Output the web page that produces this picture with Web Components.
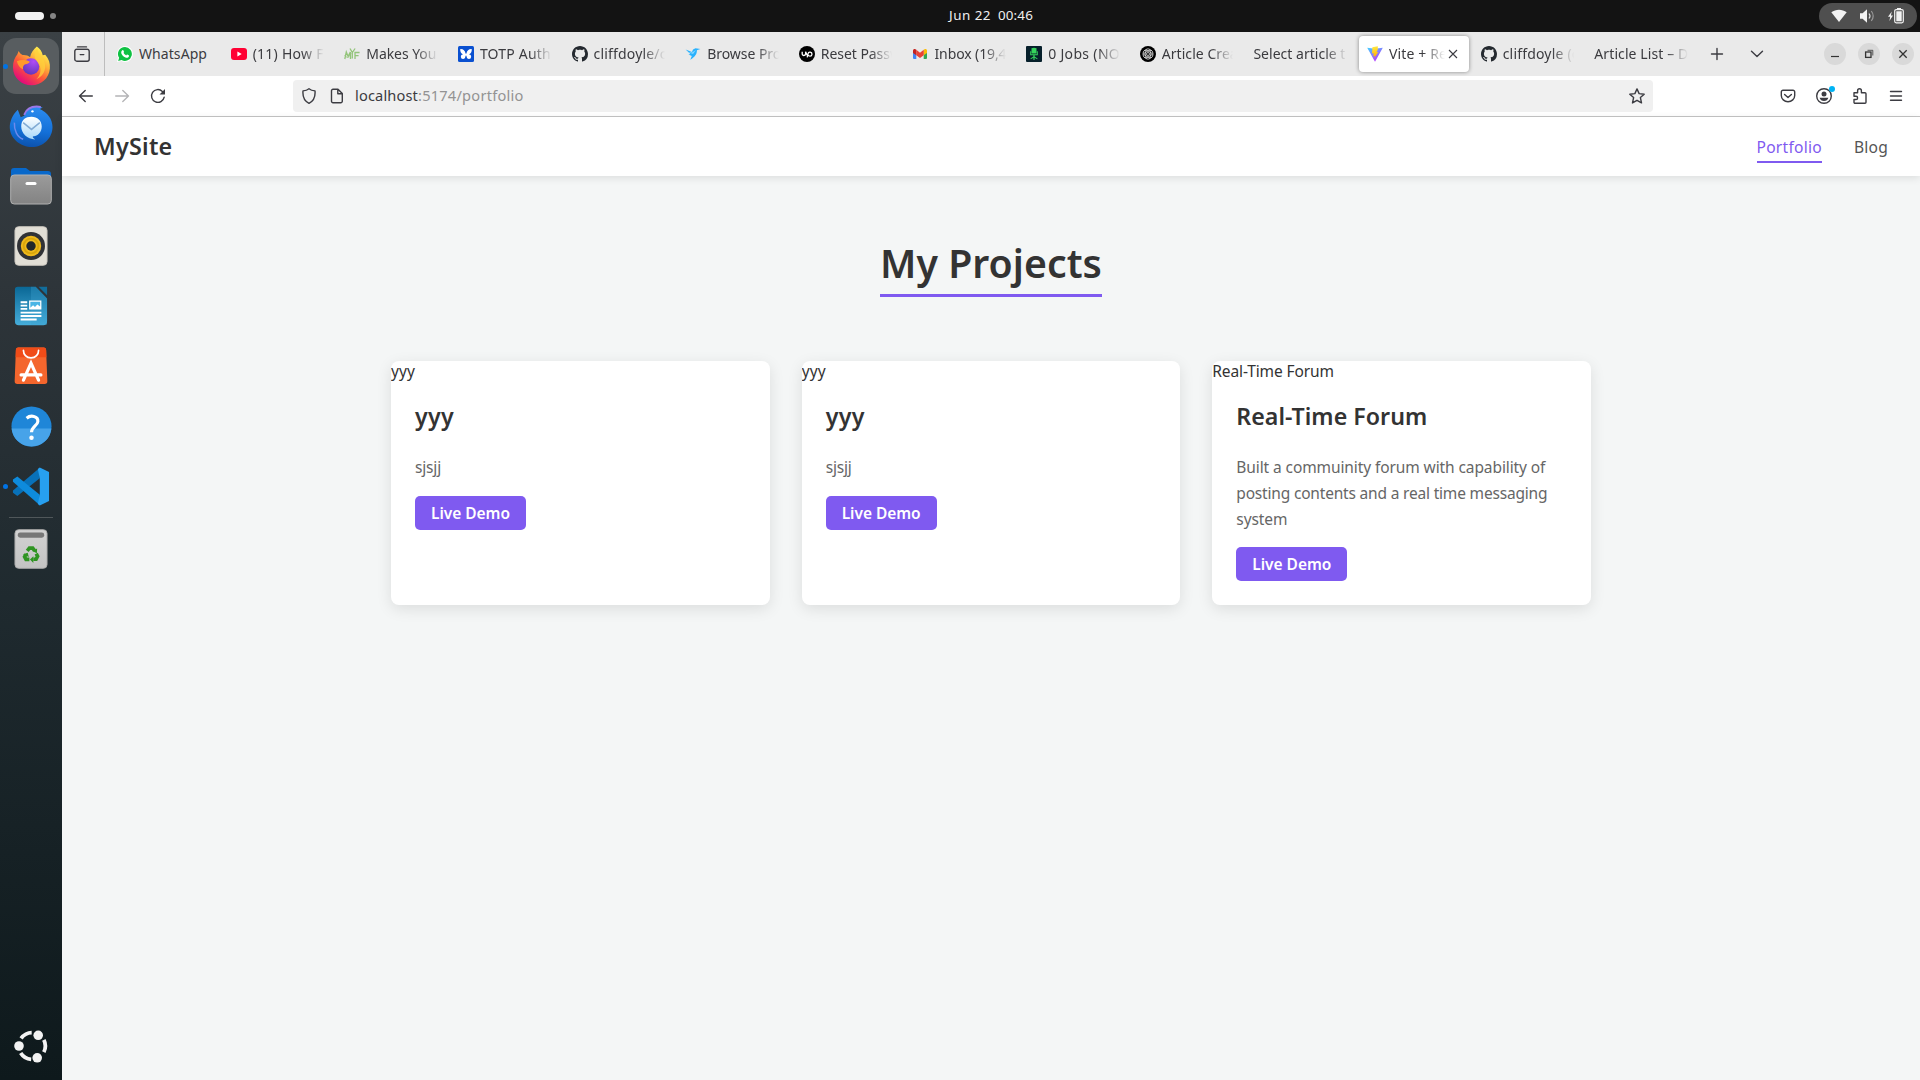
<!DOCTYPE html>
<html lang="en">
<head>
<meta charset="utf-8">
<title>Vite + React</title>
<style>
  html, body { margin: 0; height: 100%; overflow: hidden; }
  body { font-family: "Noto Sans", "Open Sans", sans-serif; background: #f4f6f6; }
</style>
</head>
<body>
<desktop-shell></desktop-shell>
<script>
const line = 'fill="none" stroke="#3c3c42" stroke-width="1.4" stroke-linecap="round" stroke-linejoin="round"';
const github = ['0 0 16 16', '<path fill="#24292f" d="M8 0C3.58 0 0 3.58 0 8c0 3.54 2.29 6.53 5.47 7.59.4.07.55-.17.55-.38 0-.19-.01-.82-.01-1.49-2.01.37-2.53-.49-2.69-.94-.09-.23-.48-.94-.82-1.13-.28-.15-.68-.52-.01-.53.63-.01 1.08.58 1.23.82.72 1.21 1.87.87 2.33.66.07-.52.28-.87.51-1.07-1.78-.2-3.64-.89-3.64-3.95 0-.87.31-1.59.82-2.15-.08-.2-.36-1.02.08-2.12 0 0 .67-.21 2.2.82.64-.18 1.32-.27 2-.27s1.36.09 2 .27c1.53-1.04 2.2-.82 2.2-.82.44 1.1.16 1.92.08 2.12.51.56.82 1.27.82 2.15 0 3.07-1.87 3.75-3.65 3.95.29.25.54.73.54 1.48 0 1.07-.01 1.93-.01 2.2 0 .21.15.46.55.38A8 8 0 0 0 16 8c0-4.42-3.58-8-8-8z"/>'];
const ICONS = {
  github,
  library: ['0 0 16 16', `<g ${line}><path d="M3.500.9h9M1.800 3.400h12.400" /><rect x=".8" y="3.400" width="14.400" height="11.800" rx="2"/><path d="M6.200 8.600h3.600"/></g>`],
  whatsapp: ['0 0 16 16', '<path fill="#fff" d="M8 0a8 8 0 0 1 0 16 8 8 0 0 1-3.600-.9L0 16l1-4.200A8 8 0 0 1 8 0z"/><path fill="#10c143" d="M8 .9a7 7 0 1 1-3.400 13.200L1.200 15l.9-3.300A7 7 0 0 1 8 .9z"/><path fill="#fff" d="M5.400 4.200c.4-.3.8-.2 1 .2l.6 1.400c.1.3 0 .5-.5 1 .6 1.300 1.400 2 2.700 2.600.5-.7.7-.9 1-.8l1.500.7c.4.2.4.6.2 1.100-.5 1.200-2 1.500-3.400 1C6.300 10.600 4.900 9.100 4.300 7.200 4 5.900 4.500 4.800 5.400 4.200z"/>'],
  youtube: ['0 0 16 16', '<rect y="2" width="16" height="12" rx="3" fill="#ff0033"/><path fill="#fff" d="m6.400 5.600 4.300 2.400-4.300 2.400z"/>'],
  myf: ['0 0 16 16', '<g fill="none" stroke="#93c47a" stroke-width="1.300"><path d="m.8 13 1.500-7 1.800 4.500L6.300 6 6.500 13M6 2.500l2.300 4 2.800-4M8.300 6.500v6M11 13V6.500h4.600M11 9.700h3.600"/><path d="m.5 9 3 3 4-4.500" stroke-width=".8"/></g>'],
  totp: ['0 0 16 16', '<rect width="16" height="16" rx="1.500" fill="#0a50d0"/><g fill="#fff"><path d="M2.300 3C5.200 2.800 7 4.400 7.500 7.300L8 8l.5-.7C9 4.400 10.800 2.800 13.700 3c.3 2.600-.6 4.400-2.700 5.300a2.300 2.300 0 1 1-2.400 2.200L8 9.300l-.6 1.200A2.300 2.300 0 1 1 5 8.300C2.900 7.400 2 5.600 2.300 3z"/></g>'],
  bird: ['0 0 16 16', '<path fill="#29b2fe" d="M.6 3.500 7 6l1-2.500 2.500-1.300L15.400 3 11.900 4.300C12 8 10 11 5.300 13.700L6.800 10 3.500 8.500 5.400 8z"/><path fill="#8ad7ff" d="m2.600 6 4.400.600L11 4 8 8z"/>'],
  upwork: ['0 0 16 16', '<circle cx="8" cy="8" r="8" fill="#000"/><path d="M3.200 5.800v2a1.700 1.700 0 0 0 3.400 0v-2c.6 2 1.500 3.500 2.600 4.300M8.200 11.300l.8-3.500a2 2 0 1 1 2 2.300c-1 0-1.800-.6-2.500-1.600" fill="none" stroke="#fff" stroke-width="1.300"/>'],
  gmail: ['0 0 16 16', '<path fill="#4285f4" d="M1 5h3.300v8H2a1 1 0 0 1-1-1z"/><path fill="#34a853" d="M11.700 5H15v7a1 1 0 0 1-1 1h-2.300z"/><path fill="#fbbc04" d="M11.700 3.800C13 2.400 15 3 15 4.700V7l-3.300 2.200z"/><path fill="#c5221f" d="M4.300 3.800C3 2.400 1 3 1 4.700V7l3.300 2.200z"/><path fill="#ea4335" d="M4.300 3.800 8 6.700l3.700-2.900v5.400L8 12 4.300 9.200z"/>'],
  jobs: ['0 0 16 16', '<rect width="16" height="16" rx="1" fill="#07202b"/><path fill="#35d45c" d="M5.500 2.300Q8 1.300 10.500 2.300V7.600h-5zM4.200 5.300h.9v3h5.800v-3h.9v4H8.600v1.300l3 1.900-.4.800-2.600-1.500V14H7.400v-2.200l-2.600 1.500-.4-.8 3-1.900V9.300H4.200z"/>'],
  openai: ['0 0 16 16', '<circle cx="8" cy="8" r="8" fill="#000"/><g fill="none" stroke="#ddd" stroke-width=".8"><rect x="5.300" y="2.800" width="5.400" height="10.400" rx="2.700"/><rect x="5.300" y="2.800" width="5.400" height="10.400" rx="2.700" transform="rotate(60 8 8)"/><rect x="5.300" y="2.800" width="5.400" height="10.400" rx="2.700" transform="rotate(120 8 8)"/><circle cx="8" cy="8" r="1.500"/></g>'],
  vite: ['0 0 16 16', '<defs><linearGradient id="a" x1="0" y1="0" x2=".6" y2="1"><stop stop-color="#41d1ff"/><stop offset="1" stop-color="#bd34fe"/></linearGradient><linearGradient id="b" x1=".5" y1="0" x2=".6" y2="1"><stop stop-color="#ffe83e"/><stop offset="1" stop-color="#ffa800"/></linearGradient></defs><path fill="url(#a)" d="M.2 1.800 8 2.700l7.800-.9L8 15.800z"/><path fill="url(#b)" d="m10.800.3-5.400 1L5 7.500l1.800-.3-.6 3 1.800-.5-1 2.800L11.300 6l-1.800.3 1.300-2.500z"/>'],
  close: ['0 0 16 16', '<path d="m4 4 8 8m0-8-8 8" fill="none" stroke="#3c3c42" stroke-width="1.100"/>'],
  plus: ['0 0 16 16', `<path ${line} d="M8 2.500v11M2.500 8h11"/>`],
  chevron: ['0 0 16 16', `<path ${line} d="M2.500 5.300 8 10.600l5.500-5.300"/>`],
  min: ['0 0 16 16', '<path d="M4 10.500h8" stroke="#333" stroke-width="1.200"/>'],
  restore: ['0 0 16 16', '<g fill="none" stroke="#333"><rect x="4.600" y="6" width="5.400" height="5.400" stroke-width="1.300"/><path d="M6.500 4.300h5.300v5.200" stroke-width=".8"/></g>'],
  x: ['0 0 16 16', '<path d="m4.300 4.300 7.400 7.400m0-7.400-7.400 7.400" stroke="#333" stroke-width="1.300"/>'],
  back: ['0 0 16 16', `<path ${line} d="M14.300 8H1.500m5.700-5.400L1.500 8l5.700 5.400"/>`],
  forward: ['0 0 16 16', `<path ${line} style="stroke:#b4b4b6" d="M1.700 8h12.800M8.800 2.600 14.500 8l-5.700 5.400"/>`],
  reload: ['0 0 16 16', `<path ${line} d="M14.200 9.200A6.400 6.400 0 1 1 12.400 3.400"/><path fill="#3c3c42" d="M15 1v5.600H9.500z"/>`],
  shield: ['0 0 16 16', `<path ${line} d="M8 .8c1.400 1.200 3.500 2 6 2.100C14.500 8.500 12.800 13 8 15.300 3.200 13 1.500 8.500 2 2.900 4.500 2.800 6.600 2 8 .8z"/>`],
  page: ['0 0 16 16', `<path ${line} d="M4 1.300h5l4.300 4.300v7.600a1.500 1.500 0 0 1-1.500 1.500H4a1.500 1.500 0 0 1-1.500-1.500V2.800A1.500 1.500 0 0 1 4 1.300zM8.800 1.500v4.300H13"/>`],
  star: ['0 0 16 16', `<path ${line} d="m8 .9 2.100 4.700 5.100.6-3.800 3.400 1.100 5.300L8 12.300l-4.500 2.600 1.100-5.300L.8 6.200l5.100-.6z"/>`],
  pocket: ['0 0 16 16', `<path ${line} d="M3 2.300h10a1.700 1.700 0 0 1 1.700 1.700v3.500a6.700 6.200 0 0 1-13.400 0V4A1.700 1.700 0 0 1 3 2.300zM4.600 6.500 8 9.500l3.400-3"/>`],
  account: ['0 0 16 16', `<circle cx="8" cy="8" r="7.300" ${line}/><circle cx="8" cy="6" r="2.500" fill="#3c3c42"/><path fill="#3c3c42" d="M3.600 9.800h8.800c-.5 2-2.200 3.300-4.400 3.300s-3.900-1.300-4.400-3.300z"/>`],
  puzzle: ['0 0 16 16', `<path ${line} d="M2 4.800h3.600V2.700a1.900 1.900 0 0 1 3.800 0v2.100H13a1 1 0 0 1 1 1v8.500a1 1 0 0 1-1 1H3a1 1 0 0 1-1-1v-2.800h2a1.500 1.500 0 0 0 0-3.200H2z"/>`],
  menu: ['0 0 16 16', `<path ${line} d="M2.500 3.500h11M2.500 8h11M2.500 12.300h11"/>`],
  wifi: ['0 0 16 16', '<path fill="#f2f2f2" d="M.3 4.300C4.800.9 11.200.9 15.700 4.300L8 14z"/>'],
  volume: ['0 0 16 16', '<path fill="#f2f2f2" d="M1 5.200h2.600L8 1.300v13.400l-4.400-3.900H1z"/><g fill="none" stroke="#999" stroke-width="1.200"><path d="M10 5.500q2 2.500 0 5" stroke="#ddd"/><path d="M12.300 3q3.800 5 0 10"/></g>'],
  battery: ['0 0 18 16', '<path fill="#f2f2f2" d="M4.800 3.500 1 8.700h2.200l-.8 4.300L6 7.600H3.900z"/><rect x="7.700" y="1.600" width="8.600" height="13.200" rx="1.500" fill="none" stroke="#f2f2f2" stroke-width="1.200"/><path fill="#f2f2f2" d="M10 0h4v1.500h-4zM9.300 3.300h5.400v9.900H9.300z"/>'],
  firefox: ['0 0 40 40', '<defs><linearGradient id="a" x1=".85" y1=".1" x2=".25" y2=".95"><stop stop-color="#fff44f"/><stop offset=".3" stop-color="#ffb43a"/><stop offset=".6" stop-color="#ff5a36"/><stop offset="1" stop-color="#e2087d"/></linearGradient><radialGradient id="b" cx=".65" cy=".2" r=".9"><stop stop-color="#b04cf5"/><stop offset="1" stop-color="#5a35b5"/></radialGradient></defs><path fill="url(#a)" d="M25.500 0c3 2 5.500 5.500 6 9l2.600-.5c3.800 4.500 5.200 8.800 4.700 14.200C38 32.500 30 39.700 20 39.700S1.200 32.200 1 21.500C.9 16 2.700 11.500 5.500 8l1.300-3.500c1 2 2.300 3.200 4 4.200 3-.3 5.700.5 7.700 2.300C19.500 6 22 3 25.500 0z"/><circle cx="19.500" cy="20.500" r="8.500" fill="url(#b)"/><path fill="#ff9a2c" d="M5 15c4-1.500 9-1.500 13 .3.600 1.800-2.500 2.300-4.500 3-1.700.7-2.500 2.500-2.200 5-3.500-1.600-5.500-4.500-6.300-8.300z"/><path fill="#ffd23c" opacity=".75" d="M26 1.500c0 7 8.300 10 8 19.500-.2 6-4 10.500-9 12.500 4-4 5-8.500 3.700-13C27.500 15 19 12 26 1.500z"/>'],
  thunderbird: ['0 0 44 44', '<defs><linearGradient id="a" x1=".6" y1="0" x2=".5" y2="1"><stop stop-color="#2c8cf0"/><stop offset=".6" stop-color="#1470d8"/><stop offset="1" stop-color="#0c52ad"/></linearGradient><linearGradient id="b" x1="0" y1="0" x2="0" y2="1"><stop stop-color="#fff"/><stop offset="1" stop-color="#a7d8fa"/></linearGradient></defs><path fill="url(#a)" d="M15 11C18 3 25 0 34 2.500L31 4c8 3.500 13 10.500 13 18.500C44 34 34.500 43 23 43S.5 34.500.3 23C.2 17 3 10 8.500 4.800L11.500 12.500z"/><path d="M15 10C18 2.500 24 .7 32 2" fill="none" stroke="#9b78e8" stroke-width="2"/><path d="M5 18c-.5 8 3 15 9 17" fill="none" stroke="#6d8aec" stroke-width="1.500"/><circle cx="23.500" cy="6.500" r="1.200" fill="#fff"/><path fill="url(#b)" d="M22.500 12c6 0 10.500 4 10.500 10s-4.500 10-8 10c-2 0-1.300 1.600 1.300 3.200C18 35 12 29 12 22s4.500-10 10.500-10z"/><path d="m14 18 8.500 7 8.500-7" fill="none" stroke="#82abd4" stroke-width="1.500"/>'],
  files: ['0 0 42 40', '<defs><linearGradient id="a" x1="0" y1="0" x2="0" y2="1"><stop stop-color="#9b9b9b"/><stop offset="1" stop-color="#838383"/></linearGradient></defs><path fill="#0868ca" d="M4 2h12l4 3h18a3 3 0 0 1 3 3v11H1V5a3 3 0 0 1 3-3z"/><rect x=".7" y="9" width="40.600" height="29" rx="3.500" fill="url(#a)" stroke="#b1b1b1"/><rect x="15.500" y="16" width="11" height="3" rx="1.500" fill="#fff"/>'],
  music: ['0 0 36 42', '<rect x="1" y=".5" width="34" height="41" rx="4" fill="#e2dfd6" stroke="#c8c4bc"/><circle cx="18" cy="21" r="14.800" fill="#303236"/><circle cx="18" cy="21" r="10.800" fill="#efb91c"/><circle cx="18" cy="21" r="7.800" fill="none" stroke="#d9a60b" stroke-width="2"/><circle cx="18" cy="21" r="5" fill="#22272b"/>'],
  writer: ['0 0 36 42', '<defs><linearGradient id="a" x1="0" y1="0" x2="0" y2="1"><stop stop-color="#0a6795"/><stop offset="1" stop-color="#46aedb"/></linearGradient></defs><path fill="url(#a)" d="M4 .5h19L35 13v24.500a4 4 0 0 1-4 4H5a4 4 0 0 1-4-4v-34A3 3 0 0 1 4 .5z"/><path fill="#3ba1cf" opacity=".35" d="M18 .5h5L35 13v28H18z"/><path fill="#126d9b" d="M26 .5h9v9z"/><path fill="#fff" d="M7 16h7v2H7zM7 19.600h7v2H7zM7 23h7v2H7zM7 27h22v2H7zM7 30.600h22v2H7zM7 34.300h17v2H7zM16 15.300h13v9.500H16z"/><path fill="#4ab5e5" d="M17.300 16.500h10.400v5l-3-2-2.500 2.500-2-1.700-2.900 2.500z"/>'],
  software: ['0 0 36 42', '<path fill="#f4662d" d="M4.500 1.500h27a2.500 2.500 0 0 1 2.500 2.300l1.300 33a3 3 0 0 1-3 3.200H3.700a3 3 0 0 1-3-3.200L2 3.800a2.500 2.500 0 0 1 2.500-2.300z"/><path fill="#f04c18" d="M4.500 1.500h27a2.500 2.500 0 0 1 2.500 2.300l.3 8H1.700L2 3.800a2.500 2.500 0 0 1 2.500-2.300z"/><path d="M10 4.500c0 4 3 8 8 8s8-4 8-8" fill="none" stroke="#fff" stroke-width="1.800" stroke-linecap="round"/><path d="m10 36 8-18 8 18M7.500 30.500h21" fill="none" stroke="#fff" stroke-width="3.400" stroke-linecap="round"/>'],
  help: ['0 0 42 42', '<circle cx="21" cy="21" r="20.500" fill="#1f86d8"/><path fill="#47a3e9" d="M.6 23h40.800a20.500 20.500 0 0 1-40.800 0z"/><path d="M16 12.500C20 9 28 10 27.500 16c-.3 4-6.500 5.500-6.500 11" fill="none" stroke="#fff" stroke-width="3.200"/><circle cx="21" cy="32.500" r="2.300" fill="#fff"/>'],
  vscode: ['0 0 40 40', '<path fill="#0871b9" d="M29 .8v10.700L6 29.700 1.500 26.300V24z"/><path fill="#0e8bdc" d="m6 9.800-4.500 3V15L29 39.300V28.500z"/><path fill="#27a0f0" d="m29 .5 9.500 4.700v29.700L29 39.500l-2-1.500 2-10V11.500L27 2z"/>'],
  trash: ['0 0 36 42', '<defs><linearGradient id="a" x1="0" y1="0" x2="0" y2="1"><stop stop-color="#d2d2d2"/><stop offset="1" stop-color="#c3c3c3"/></linearGradient></defs><rect x="1" y=".5" width="34" height="41" rx="4" fill="url(#a)" stroke="#a7a7a7"/><rect x="4" y="3.500" width="28" height="5.500" rx="2.500" fill="#777"/><g fill="none" stroke="#2f9422" stroke-width="3.800"><path d="m14 23 2.300-2.900h3.500l2 2.600"/><path d="m23.500 26 1.500 2.800-1.600 3H20.500"/><path d="M16.300 32h-3.600l-1.500-2.800 1.400-2.400"/></g><path fill="#2f9422" d="m24.500 20.500-.3 5-4.800-2.500zM20.500 35.800v-7l-3.600 3.300zM9.500 26.500l5-1.500 1.200 4.500z"/>'],
  ubuntu: ['0 0 34 34', '<circle cx="18" cy="17" r="13.300" fill="none" stroke="#f3f3f3" stroke-width="3.800" stroke-dasharray="12.500 15.355" transform="rotate(-27 18 17)"/><g fill="#f3f3f3"><circle cx="5" cy="17" r="4.800"/><circle cx="24.200" cy="6.300" r="4.800"/><circle cx="23.200" cy="28.800" r="4.800"/></g>']
};

class Base extends HTMLElement {
  connectedCallback() {
    if (!this.shadowRoot) this.attachShadow({ mode: 'open' });
    this.shadowRoot.innerHTML = this.render();
    this.ready?.();
  }
  attr(name, fallback = '') { return this.getAttribute(name) ?? fallback; }
}

/* One inline SVG picture, sized by its w and h attributes. */
customElements.define('ui-icon', class extends Base {
  render() {
    const [box, body] = ICONS[this.attr('name')];
    const w = this.attr('w', '16'), h = this.attr('h', w);
    return `<style>:host{display:block;flex:none;width:${w}px;height:${h}px}svg{display:block;width:100%;height:100%}</style><svg viewBox="${box}">${body}</svg>`;
  }
});

/* A single line of text whose tracking is set so that it fills a given width. */
customElements.define('fit-text', class extends Base {
  render() {
    return `<style>:host{display:block;flex:none;white-space:pre;width:${this.attr('w')}px}span{display:inline-block}</style><span>${this.attr('text')}</span>`;
  }
  ready() {
    const span = this.shadowRoot.querySelector('span');
    const gap = (Number(this.attr('w')) - span.getBoundingClientRect().width) / this.attr('text').length;
    span.style.letterSpacing = gap.toFixed(3) + 'px';
  }
});

customElements.define('top-bar', class extends Base {
  render() {
    return `<style>
      :host{display:grid;grid-template-columns:934px auto 1fr;align-items:center;height:32px;background:#131313;color:#f0f0f0;font-size:13.400px;line-height:30px;box-sizing:border-box;padding:0 3px 0 15px}
      .work{display:flex;align-items:center;gap:6px}.pill{width:29px;height:8px;border-radius:4px;background:#f2f2f2}.dot{width:6px;height:6px;border-radius:3px;background:#858585}
      .clock{display:flex;gap:7px;height:32px}
      .status{justify-self:end;display:flex;align-items:center;gap:12px;height:26px;border-radius:13px;background:#4f4f4f;padding:0 12px 0 12px}
    </style><div class="work"><div class="pill"></div><div class="dot"></div></div>
    <div class="clock"><fit-text text="Jun 22" w="42"></fit-text><fit-text text="00:46" w="35"></fit-text></div>
    <div class="status"><ui-icon name="wifi"></ui-icon><ui-icon name="volume"></ui-icon><ui-icon name="battery" w="18" h="16"></ui-icon></div>`;
  }
});

customElements.define('dock-item', class extends Base {
  render() {
    return `<style>:host{display:flex;position:relative;width:56px;height:56px;flex:none;align-items:center;justify-content:center;border-radius:13px}
      :host([active]){background:#585d60}
      :host([running])::before{content:"";position:absolute;left:0;top:25.500px;width:5px;height:5px;border-radius:3px;background:#0073e5}
      </style><slot></slot>`;
  }
});

customElements.define('side-dock', class extends Base {
  render() {
    const item = (n, w, h, a = '') => `<dock-item ${a}><ui-icon name="${n}" w="${w}" h="${h}"></ui-icon></dock-item>`;
    return `<style>:host{display:flex;flex-direction:column;align-items:center;gap:4px;width:62px;box-sizing:border-box;padding:6px 0 6px;background:linear-gradient(#3b4145,#2d3439 26%,#1f2a2f 54%,#0e191c)}
      hr{width:44px;height:1px;border:0;margin:-1px 0 -1px;background:#50575a;flex:none}.grow{flex:1}</style>
      ${item('firefox', 39, 40, 'active running')}${item('thunderbird', 44, 43)}${item('files', 42, 40)}${item('music', 34, 42)}${item('writer', 34, 42)}${item('software', 34, 42)}${item('help', 41, 41)}${item('vscode', 40, 39, 'running')}
      <hr>${item('trash', 34, 42)}<div class="grow"></div>${item('ubuntu', 34, 34)}`;
  }
});

customElements.define('browser-tab', class extends Base {
  render() {
    const icon = this.attr('icon');
    const active = this.hasAttribute('active');
    return `<style>:host{display:flex;align-items:center;gap:6px;width:109.650px;height:36px;flex:none;box-sizing:border-box;padding:0 8px;border-radius:4px}
      :host([active]){background:#fff;box-shadow:0 0 4px rgba(0,0,0,.42)}
      .label{flex:1;min-width:0;overflow:hidden;margin-right:${active ? -2 : 0}px;-webkit-mask-image:linear-gradient(90deg,#000 calc(100% - 22px),transparent)}
      :host([whole]) .label{-webkit-mask-image:none}</style>
      ${icon ? `<ui-icon name="${icon}"></ui-icon>` : ''}<div class="label"><fit-text text="${this.attr('text')}" w="${this.attr('w')}"></fit-text></div>${active ? '<ui-icon name="close" style="margin:0 0 0 -4px"></ui-icon>' : ''}`;
  }
});

customElements.define('tab-strip', class extends Base {
  render() {
    const tabs = [['whatsapp', 'WhatsApp', 68, 'whole'], ['youtube', '(11) How F', 71], ['myf', 'Makes You', 70], ['totp', 'TOTP Auth', 71], ['github', 'cliffdoyle/c', 73], ['bird', 'Browse Pro', 74], ['upwork', 'Reset Passw', 80], ['gmail', 'Inbox (19,4', 72], ['jobs', '0 Jobs (NO', 72], ['openai', 'Article Crea', 76], ['', 'Select article t', 92], ['vite', 'Vite + Re', 58, 'active'], ['github', 'cliffdoyle (c', 76], ['', 'Article List – D', 94]];
    return `<style>:host{display:flex;align-items:center;height:44px;background:#eaeaea;color:#3b3b3f;font-size:14px;line-height:36px}
      .lib{display:flex;align-items:center;justify-content:center;width:43px;height:44px;border-right:1px solid #bdbdbd;box-sizing:border-box;padding-right:3px}
      .tabs{display:flex;gap:4px;margin-left:4px}.after{display:flex;gap:24px;margin-left:13.500px}
      .win{display:flex;gap:12px;margin-left:auto;margin-right:6px}.win div{width:22px;height:22px;border-radius:50%;background:#d9d9d9;display:flex;align-items:center;justify-content:center}</style>
      <div class="lib"><ui-icon name="library"></ui-icon></div>
      <div class="tabs">${tabs.map(([i, t, w, a = '']) => `<browser-tab icon="${i}" text="${t}" w="${w}" ${a}></browser-tab>`).join('')}</div>
      <div class="after"><ui-icon name="plus"></ui-icon><ui-icon name="chevron"></ui-icon></div>
      <div class="win"><div><ui-icon name="min"></ui-icon></div><div><ui-icon name="restore"></ui-icon></div><div><ui-icon name="x"></ui-icon></div></div>`;
  }
});

customElements.define('nav-toolbar', class extends Base {
  render() {
    return `<style>:host{display:flex;align-items:center;height:41px;box-sizing:border-box;border-bottom:1px solid #c5c5c5;background:#fff;padding:0 16px}
      .nav{display:flex;gap:20px}
      .url{display:flex;align-items:center;width:1360px;height:32px;margin-left:127px;box-sizing:border-box;padding:0 8px;background:#f0f0f0;border-radius:4px;font-size:14.600px;line-height:30px;color:#939393}
      .url fit-text{height:32px}
      .url ui-icon+ui-icon{margin:0 10px 0 12px}.host{color:#3b3b3f}.url ui-icon:last-child{margin-left:auto}
      .tools{display:flex;gap:20px;margin-left:auto}.me{position:relative}.me::after{content:"";position:absolute;right:-3px;top:-2px;width:6px;height:6px;border-radius:50%;background:#00b3f4}</style>
      <div class="nav"><ui-icon name="back"></ui-icon><ui-icon name="forward"></ui-icon><ui-icon name="reload"></ui-icon></div>
      <div class="url"><ui-icon name="shield"></ui-icon><ui-icon name="page"></ui-icon><fit-text class="host" text="localhost" w="63"></fit-text><fit-text text=":5174/portfolio" w="105.500"></fit-text><ui-icon name="star"></ui-icon></div>
      <div class="tools"><ui-icon name="pocket"></ui-icon><div class="me"><ui-icon name="account"></ui-icon></div><ui-icon name="puzzle"></ui-icon><ui-icon name="menu"></ui-icon></div>`;
  }
});

customElements.define('site-header', class extends Base {
  render() {
    return `<style>:host{display:flex;justify-content:space-between;align-items:center;height:59px;box-sizing:border-box;padding:0 32px;background:#fff;box-shadow:0 2px 8px rgba(0,0,0,.1);position:relative}
      .brand{font-size:23.300px;font-weight:600;color:#333;line-height:59px}
      nav{display:flex;gap:32px;font-size:15.600px;font-weight:450;line-height:24px;color:#555;padding-top:2px}.on{color:#7f5af0;border-bottom:2px solid #7f5af0;padding:2px 0}.off{padding-top:2px}</style>
      <fit-text class="brand" text="MySite" w="78.500"></fit-text><nav><div class="on"><fit-text text="Portfolio" w="65.500"></fit-text></div><div class="off"><fit-text text="Blog" w="34"></fit-text></div></nav>`;
  }
});

customElements.define('project-card', class extends Base {
  render() {
    const lines = JSON.parse(this.attr('lines'));
    return `<style>:host{display:block;background:#fff;border-radius:8px;box-shadow:0 4px 15px rgba(0,0,0,.1);height:244px;overflow:hidden;font-size:15.500px}
      .alt{line-height:20px;height:18px;color:#333}.body{padding:24px}.title{font-size:23.200px;font-weight:600;line-height:27px;color:#333;margin-bottom:25.400px}
      .desc{line-height:25.600px;color:#666}.btn{display:inline-flex;box-sizing:border-box;height:34px;line-height:35px;padding:0 16px;margin-top:14.800px;background:#7f5af0;color:#fff;font-weight:600;border-radius:5px}</style>
      <fit-text class="alt" text="${this.attr('name')}" w="${this.attr('altw')}"></fit-text>
      <div class="body"><fit-text class="title" text="${this.attr('name')}" w="${this.attr('tw')}"></fit-text>
      <div class="desc">${lines.map(([t, w]) => `<fit-text text="${t}" w="${w}"></fit-text>`).join('')}</div>
      <div class="btn"><fit-text text="Live Demo" w="79"></fit-text></div></div>`;
  }
});

customElements.define('portfolio-page', class extends Base {
  render() {
    const y = `<project-card name="yyy" altw="24" tw="39" lines='[["sjsjj",26]]'></project-card>`;
    return `<style>:host{display:flex;flex-direction:column;align-items:center;flex:1;background:#f4f6f6;padding-top:63px}
      .h{line-height:48px;font-size:39.200px;font-weight:600;color:#333;border-bottom:3px solid #7f5af0;padding-bottom:7px}
      .grid{display:grid;grid-template-columns:repeat(3,1fr);gap:32px;width:1200px;margin-top:64px}</style>
      <div class="h"><fit-text text="My Projects" w="222"></fit-text></div>
      <div class="grid">${y}${y}<project-card name="Real-Time Forum" altw="121.500" tw="191" lines='[["Built a commuinity forum with capability of",309],["posting contents and a real time messaging",311],["system",51]]'></project-card></div>`;
  }
});

customElements.define('desktop-shell', class extends Base {
  render() {
    return `<style>:host{display:flex;flex-direction:column;width:1920px;height:1080px}.row{display:flex;flex:1;min-height:0}.win{display:flex;flex-direction:column;flex:1;min-width:0}</style>
      <top-bar></top-bar><div class="row"><side-dock></side-dock><div class="win"><tab-strip></tab-strip><nav-toolbar></nav-toolbar><site-header></site-header><portfolio-page></portfolio-page></div></div>`;
  }
});
</script>
</body>
</html>
